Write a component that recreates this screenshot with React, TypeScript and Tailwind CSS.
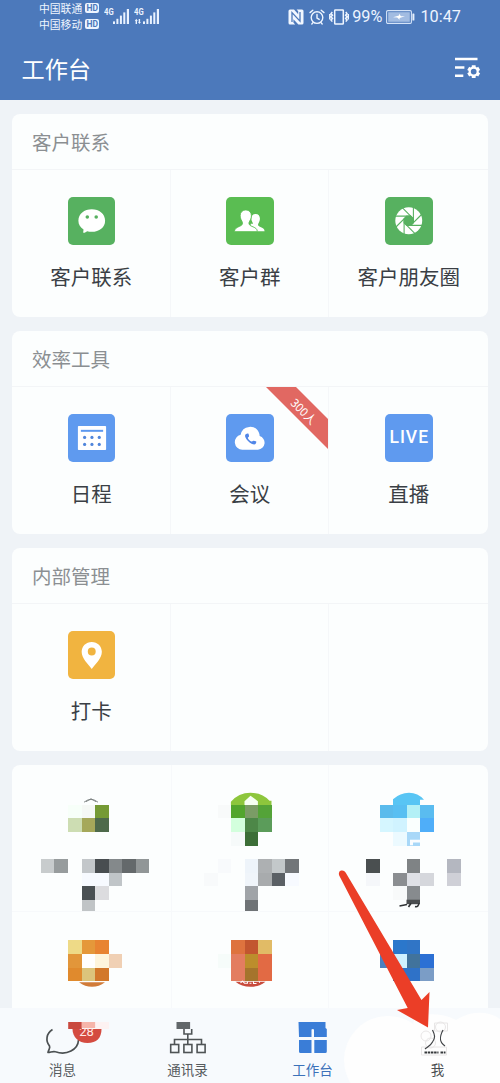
import type { ReactNode } from 'react';

const TILE = 13.55;
const ROW0 = 805.2;
const COL0 = 0.2;

type Tile = [col: number, row: number, color: string];

const NfcIcon = () => (
  <svg className="h-4 w-4 shrink-0" viewBox="0 0 16 16">
    <path fill="#f1f7ff" d="M2 0.5H6L10.2 5.3V2.2L8.6 0.5H14Q15.5 0.5 15.5 2V14Q15.5 15.5 14 15.5H10.4L5.4 10.2V13.6L7.2 15.5H2Q0.5 15.5 0.5 14V2Q0.5 0.5 2 0.5Z" />
    <path fill="none" stroke="#4c79bb" strokeWidth="1.3" d="M4 13V3.6L12 12.2V3" />
  </svg>
);

const AlarmIcon = () => (
  <svg className="h-4 w-4 shrink-0" viewBox="0 0 16 16" fill="none" stroke="#eef5ff" strokeWidth="1.4" strokeLinecap="round">
    <circle cx="8" cy="8.6" r="5.8" />
    <path d="M8 5.5V9L10.2 10.4M1 3.6L3.8 1.2M15 3.6L12.2 1.2M4 13.6L2.8 15M12 13.6L13.2 15" />
  </svg>
);

const VibrateIcon = () => (
  <svg className="h-4 w-5 shrink-0" viewBox="0 0 20 16" fill="none" stroke="#eef5ff" strokeWidth="1.5">
    <rect x="5.7" y="1" width="8.6" height="14" rx="0.6" />
    <path d="M3.3 3L2 4.6L3.5 6.2L2 7.8L3.5 9.4L2 11L3.3 12.6M0.8 5V10.5M16.8 3L18 4.6L16.6 6.2L18 7.8L16.6 9.4L18 11L16.8 12.6M19.3 5V10.5" />
  </svg>
);

const BatteryIcon = () => (
  <svg className="h-4 w-[29px] shrink-0" viewBox="0 0 29 16">
    <rect x="0.6" y="1.6" width="24.8" height="12.8" rx="1.2" fill="none" stroke="#d4e3f8" strokeWidth="1.1" />
    <rect x="2.2" y="3.2" width="21.6" height="9.6" fill="#a2bce2" />
    <path d="M7 8.2L13 6.5V4.8L15 7.3H19L13.6 8.9V10.8L11.2 8.6Z" fill="#fff" />
    <rect x="26.4" y="4.5" width="2" height="7" rx="0.6" fill="#e5effc" />
  </svg>
);

const Signal = ({ data }: { data?: boolean }) => (
  <div className="relative h-5 w-[26px]">
    <span className="absolute top-0 left-0 origin-left scale-x-[0.85] font-['Roboto',sans-serif] text-[9px] leading-[9px] font-bold text-[#edf4ff]">4G</span>
    <svg className="absolute inset-0 h-5 w-[26px]" viewBox="0 0 26 20" fill="#e9f2ff">
      <rect x="9" y="13.4" width="2" height="2.6" />
      <rect x="12.4" y="10.8" width="2" height="5.2" />
      <rect x="15.9" y="7.6" width="2" height="8.4" />
      <rect x="19.3" y="4.4" width="2" height="11.6" />
      <rect x="22.8" y="1" width="2.2" height="15" />
      {data && <path d="M0.8 12.9L2.3 10.8L3.8 12.9H3V16H1.6V12.9ZM4 13.9L5.4 16L6.9 13.9H6.1V11H4.7V13.9Z" />}
    </svg>
  </div>
);

const Carrier = ({ name }: { name: string }) => (
  <div className="flex h-4 items-center gap-[3px]">
    <span className="text-[10.8px] leading-4 text-[#f0f6ff]">{name}</span>
    <span className="flex h-[10px] w-[14px] items-center justify-center rounded-[2px] bg-[#edf4ff] font-['Roboto',sans-serif] text-[8.5px] leading-none font-bold text-[#4c79bb]">HD</span>
  </div>
);

const SettingsListIcon = () => (
  <svg className="h-6 w-[27px]" viewBox="0 0 27 24">
    <path d="M1 3H23.5M1 11.4H10.4M1 19.7H9.3" stroke="#fff" strokeWidth="2.5" />
    <path d="M19.7 9.2V22M14.2 12.4L25.2 18.8M25.2 12.4L14.2 18.8" stroke="#fff" strokeWidth="3.8" />
    <circle cx="19.7" cy="15.6" r="4" fill="#4c79bb" stroke="#fff" strokeWidth="2.2" />
  </svg>
);

const ChatIcon = () => (
  <svg className="h-full w-full" viewBox="0 0 48 48">
    <path fill="#fff" d="M24 12.5C31.6 12.5 37.5 17.3 37.5 24C37.5 30.8 31.6 35.2 24 35.2C22.4 35.2 20.8 35 19.4 34.6C18.2 35.3 17 36.4 15.6 36.2C15 36 15.6 34.5 15.7 32.8C12.5 30.8 10.5 27.8 10.5 24C10.5 17.3 16.4 12.5 24 12.5Z" />
    <circle cx="19.5" cy="20.3" r="1.8" fill="#57b160" />
    <circle cx="28.5" cy="20.3" r="1.8" fill="#57b160" />
  </svg>
);

const PeopleIcon = () => (
  <svg className="h-full w-full" viewBox="0 0 48 48" fill="#fff">
    <path d="M29.9 17.2C32.8 17.2 34.3 19.3 34.3 22C34.3 24.3 33 26 32.5 27.3C32.1 28.9 33 29.5 34.8 30.3C37.1 31.3 38.8 32 39 34.5H25V27L27.4 27C27 25.8 25.6 24 25.6 22C25.6 19.3 27 17.2 29.9 17.2Z" />
    <path stroke="#5abd52" strokeWidth="0.9" d="M20 13.1C23.6 13.1 25.7 15.6 25.7 19C25.7 22 24.1 23.8 23.3 25.7C22.8 27.8 24 28.7 26.3 29.7C29.5 31 31.6 32 31.7 35H8.5C8.5 32.3 10.4 31 13.5 29.7C15.9 28.7 17 27.8 16.6 25.7C15.9 23.8 14.3 22 14.3 19C14.3 15.6 16.4 13.1 20 13.1Z" />
  </svg>
);

const MomentsIcon = () => (
  <svg className="h-full w-full" viewBox="-24 -24 48 48">
    <circle r="13.6" fill="#fff" />
    <g fill="#57b160" stroke="#57b160" strokeWidth="1.1">
      <path d="M4.7 -2L2 -4.7H-2L-4.7 -2V2L-2 4.7H2L4.7 2Z" />
      {[0, 45, 90, 135, 180, 225, 270, 315].map((a) => (
        <path key={a} d="M4.7 2V-14" transform={`rotate(${a})`} />
      ))}
    </g>
  </svg>
);

const CalendarIcon = () => (
  <svg className="h-full w-full" viewBox="0 0 48 48">
    <rect x="10" y="12" width="28.5" height="24.5" rx="0.8" fill="#fff" />
    <rect x="13" y="16" width="22.5" height="2" fill="#5d98ef" />
    {[16.8, 24.2, 31.6].map((x) => (
      <g key={x} fill="#5186dc">
        <circle cx={x} cy="23.7" r="1.6" />
        <circle cx={x} cy="30.7" r="1.6" />
      </g>
    ))}
  </svg>
);

const CloudCallIcon = () => (
  <svg className="h-full w-full" viewBox="0 0 48 48">
    <path fill="#fff" d="M16.5 36A7.6 7.6 0 0 1 14.8 21A9.7 9.7 0 0 1 33.4 19.2C33.8 20.2 34 21.3 34 22.3A7 7 0 0 1 32.3 36Z" />
    <path fill="#5186e8" d="M20.2 20.2L22 19.6C22.5 19.4 23 20.5 23.3 22.3C23.4 23 22.2 23.5 22 24C22.4 25.6 24.2 27.4 25.8 27.9C26.4 28 27 26.9 27.7 27C29.4 27.3 30.7 27.7 30.7 28.2L30 30C29.6 31 27.8 31 26.3 30.3C23.4 29.1 20.6 26.3 19.6 23.6C19 22.2 19.2 20.7 20.2 20.2Z" />
  </svg>
);

const PinIcon = () => (
  <svg className="h-full w-full" viewBox="0 0 48 48">
    <path fill="#fff" fillRule="evenodd" d="M24 11C29.8 11 34.2 15.4 34.2 21C34.2 27.6 27.8 33.5 24 38.3C20.2 33.5 13.8 27.6 13.8 21C13.8 15.4 18.2 11 24 11ZM24 16.7A4 4 0 1 0 24 24.7A4 4 0 1 0 24 16.7Z" />
  </svg>
);

const AppEntry = ({ label, tone, children, ribbon }: { label: string; tone: string; children: ReactNode; ribbon?: boolean }) => (
  <div className="relative flex flex-col items-center overflow-hidden pt-[27px] pl-px">
    <div className={`h-[47.5px] w-[47.5px] rounded-[5px] ${tone}`}>{children}</div>
    <span className="mt-[16px] text-[20.5px] leading-[30px] text-[#3a3f45]">{label}</span>
    {ribbon && (
      <div className="absolute top-0 right-0 h-[62px] w-[62px] overflow-hidden">
        <svg className="absolute inset-0 h-full w-full" viewBox="0 0 62 62">
          <path d="M0 0H30L62 32V62Z" fill="#e16862" />
        </svg>
        <span className="absolute top-[16px] left-[18px] w-10 rotate-45 text-center text-[11.5px] leading-4 text-white">300人</span>
      </div>
    )}
  </div>
);

const Card = ({ title, children }: { title: string; children: ReactNode }) => (
  <section className="flex h-[202.5px] shrink-0 flex-col overflow-hidden rounded-lg bg-[#fcfefe]">
    <h2 className="h-14 shrink-0 border-b border-[#f3f5f7] pl-5 text-[19.5px] leading-[55px] font-normal text-[#8b8f92]">{title}</h2>
    <div className="grid flex-1 grid-cols-3 divide-x divide-[#f5f7f9]">{children}</div>
  </section>
);

const Mosaic = ({ tiles, box, under, over }: { tiles: Tile[]; box: string; under?: ReactNode; over?: ReactNode }) => (
  <svg className="block h-full w-full" viewBox={box} preserveAspectRatio="xMinYMin slice">
    {under}
    <g shapeRendering="crispEdges">
      {tiles.map(([c, r, color]) => (
        <rect key={`${c}-${r}`} x={COL0 + c * TILE} y={ROW0 + r * TILE} width={TILE} height={TILE} fill={color} />
      ))}
    </g>
    {over}
  </svg>
);

const leafTiles: Tile[] = [
  [5, 0, '#f7fff9'], [6, 0, '#f5f8f5'], [7, 0, '#759a35'], [5, 1, '#cdddb3'], [6, 1, '#a5a85a'], [7, 1, '#4e6a4b'],
  [3, 4, '#c8cccd'], [4, 4, '#979c9d'], [6, 4, '#c3c7ca'], [7, 4, '#484d50'], [8, 4, '#84898b'], [9, 4, '#64696b'], [10, 4, '#919697'],
  [6, 5, '#f7faff'], [7, 5, '#f7faff'], [8, 5, '#c0c5c8'], [6, 6, '#4a5053'], [7, 6, '#dcdcdf'], [6, 7, '#c0c4c6'],
];
const greenTiles: Tile[] = [
  [16, 0, '#f8fafa'], [17, 0, '#52a52d'], [18, 0, '#7b9c66'], [19, 0, '#54a338'], [17, 1, '#d3ffdd'], [18, 1, '#4d8748'], [19, 1, '#5b9c5a'],
  [17, 2, '#f6fafa'], [18, 2, '#3c6e37'], [16, 4, '#f8fafc'], [18, 4, '#eef4fa'], [19, 4, '#adb0b2'], [20, 4, '#c3c8ca'], [21, 4, '#727679'],
  [15, 5, '#f8fafb'], [18, 5, '#f0f5fa'], [19, 5, '#a8abad'], [20, 5, '#5b6065'], [21, 5, '#f7faff'], [18, 6, '#a0a4a8'], [18, 7, '#6f7376'],
];
const skyTiles: Tile[] = [
  [28, 0, '#5abbec'], [29, 0, '#58bff2'], [30, 0, '#b3f0f6'], [31, 0, '#5abcf0'], [28, 1, '#d5f6ff'], [29, 1, '#d0f3ff'], [30, 1, '#fafffe'], [31, 1, '#4faef9'],
  [29, 2, '#ecfaff'], [30, 2, '#a8d8f8'], [27, 4, '#4a4f50'], [30, 4, '#7f8385'], [33, 4, '#b4b7c0'],
  [27, 5, '#f5f7fa'], [29, 5, '#8b8e91'], [30, 5, '#dfe1e6'], [31, 5, '#d5d7dc'], [33, 5, '#cfd0d7'], [29, 6, '#f8fafa'], [30, 6, '#878b8e'],
];
const orangeTiles: Tile[] = [
  [5, 10, '#eeda87'], [6, 10, '#e5983a'], [7, 10, '#e88432'], [5, 11, '#e2963a'], [6, 11, '#ffffff'], [7, 11, '#fef5dc'], [8, 11, '#f0d0b4'],
  [5, 12, '#e08a2d'], [6, 12, '#dcc47b'], [7, 12, '#d2782b'],
];
const redTiles: Tile[] = [
  [17, 10, '#de733e'], [18, 10, '#c2562f'], [19, 10, '#e1bb66'], [16, 11, '#f6fcfa'], [17, 11, '#e37d60'], [18, 11, '#bc8d2c'], [19, 11, '#e26a44'],
  [17, 12, '#e37d60'], [18, 12, '#a5742c'], [19, 12, '#e26a44'],
];
const blueTiles: Tile[] = [
  [29, 10, '#2b77cb'], [30, 10, '#3075c6'], [28, 11, '#4b80bf'], [29, 11, '#d0f1ff'], [30, 11, '#41739c'], [31, 11, '#2c70d4'],
  [29, 12, '#2f72c8'], [30, 12, '#2f72c8'], [31, 12, '#7b9dc6'],
];

const MessageTabIcon = () => (
  <div className="relative h-9 w-20">
    <svg className="absolute inset-0 h-full w-full" viewBox="22.5 1020 80 36">
      <path d="M52 1029.5C45.5 1033.5 45 1041 49 1046C50 1048 48 1050 47.5 1052.5C50 1052.5 52.5 1050.8 55 1051.8C66 1055.5 77.5 1050 78 1040" fill="none" stroke="#4b5052" strokeWidth="1.7" strokeLinejoin="round" />
      <path d="M72 1029H101C101 1038 96 1043 87 1043C78 1043 72 1037 72 1029Z" fill="#d44b40" />
    </svg>
    <span className="absolute top-[4px] left-[49.5px] w-[29px] text-center font-['Roboto',sans-serif] text-[13px] leading-4 text-[#ffe8e5]">28</span>
    <svg className="absolute inset-0 h-full w-full overflow-visible" viewBox="22.5 1020 80 36">
      <rect x="67.7" y="1022" width="13.6" height="7" fill="#c9493f" />
      <rect x="81.3" y="1022" width="13.6" height="6" fill="#f6b5aa" />
      <rect x="94.9" y="1022" width="13.6" height="7" fill="#fdf2f2" />
    </svg>
  </div>
);

const ContactsTabIcon = () => (
  <svg className="h-9 w-20" viewBox="147.5 1020 80 36" fill="none" stroke="#4f5456" strokeWidth="1.6">
    <rect x="176" y="1022" width="13.6" height="7" fill="#62676a" stroke="none" />
    <path d="M183.5 1029V1034H191.2V1029M187.3 1034V1039.3M174 1044V1039.5H201V1044M187.3 1039V1044" />
    <rect x="170.2" y="1044.5" width="8" height="8" />
    <rect x="183.4" y="1044.5" width="8" height="8" />
    <rect x="196.6" y="1044.5" width="8" height="8" />
  </svg>
);

const WorkTabIcon = () => (
  <svg className="h-9 w-20" viewBox="272.5 1020 80 36" fill="#3a7dd7">
    <path d="M298 1022H325V1028L326.3 1029V1037H313.5V1029.5Q312.2 1028.5 311 1029.5V1037H298.5Z" />
    <path d="M298.5 1040H311V1053H300Q298.5 1053 298.5 1051.5ZM313.8 1040H326.3V1051.5Q326.3 1053 324.8 1053H313.8Z" />
  </svg>
);

const MeTabIcon = () => (
  <svg className="h-9 w-20" viewBox="397.5 1020 80 36" fill="none">
    <g stroke="#e5e3e3" strokeWidth="0.9">
      <circle cx="425.5" cy="1036" r="5" />
      <circle cx="440" cy="1027" r="5" />
      <circle cx="430" cy="1043" r="5" />
      <path d="M434 1023H447V1031H434ZM421 1047H446V1055H421Z" />
    </g>
    <path d="M432 1030C434.5 1035 435 1038 432 1042C430 1046 427 1047 424.5 1049M442.5 1030C438.8 1037 438.5 1042 444.5 1046" stroke="#404346" strokeWidth="1.2" />
    <path d="M424 1052.5H438M440 1052.5H445" stroke="#35383a" strokeWidth="1.8" strokeDasharray="2.5 0.7" />
  </svg>
);

const Tab = ({ label, tone, children }: { label: string; tone: string; children: ReactNode }) => (
  <div className="relative flex w-[125px] flex-col items-center pt-3">
    {children}
    <span className={`mt-[2px] text-[13.5px] leading-[22px] ${tone}`}>{label}</span>
  </div>
);

export default function App() {
  return (
    <div className="relative flex h-[1083px] w-[500px] flex-col overflow-hidden bg-[#eff3f7] font-['Noto_Sans_CJK_SC',sans-serif]">
      <header className="flex h-[100px] shrink-0 flex-col bg-[#4c79bb]">
        <div className="flex h-[35px] items-start justify-between pr-[39px] pl-[39px]">
          <div className="flex items-start">
            <div className="flex flex-col">
              <Carrier name="中国联通" />
              <Carrier name="中国移动" />
            </div>
            <div className="flex gap-1 pt-2 pl-[5px]">
              <Signal />
              <Signal data />
            </div>
          </div>
          <div className="flex items-center pt-[9px] font-['Roboto',sans-serif] text-[16.3px] leading-4 text-[#edf4ff]">
            <NfcIcon />
            <span className="w-[5px]" />
            <AlarmIcon />
            <span className="w-[4px]" />
            <VibrateIcon />
            <span className="ml-[3px]">99%</span>
            <span className="w-[4px]" />
            <BatteryIcon />
            <span className="ml-[5px]">10:47</span>
          </div>
        </div>
        <div className="flex h-[65px] items-center justify-between pr-[19px] pl-[21.5px]">
          <h1 className="text-[23.2px] leading-[64px] font-normal text-white">工作台</h1>
          <SettingsListIcon />
        </div>
      </header>

      <main className="flex h-[908px] shrink-0 flex-col gap-[14.6px] overflow-hidden pt-[14px] pr-[12.5px] pl-3">
        <Card title="客户联系">
          <AppEntry label="客户联系" tone="bg-[#57b160]"><ChatIcon /></AppEntry>
          <AppEntry label="客户群" tone="bg-[#5abd52]"><PeopleIcon /></AppEntry>
          <AppEntry label="客户朋友圈" tone="bg-[#57b160]"><MomentsIcon /></AppEntry>
        </Card>
        <Card title="效率工具">
          <AppEntry label="日程" tone="bg-[#5f9aef]"><CalendarIcon /></AppEntry>
          <AppEntry label="会议" tone="bg-[#5f9aef]" ribbon><CloudCallIcon /></AppEntry>
          <AppEntry label="直播" tone="bg-[#5f9aef]">
            <span className="flex h-full items-center justify-center pl-px font-['Roboto',sans-serif] text-[17.5px] leading-none font-medium tracking-[1px] text-white">LIVE</span>
          </AppEntry>
        </Card>
        <Card title="内部管理">
          <AppEntry label="打卡" tone="bg-[#f1b440]"><PinIcon /></AppEntry>
          <div />
          <div />
        </Card>
        <section className="grid h-[260px] shrink-0 grid-cols-3 grid-rows-[147px_113px] rounded-t-lg bg-[#fcfefe]">
          <div className="border-b border-[#f7f9fb]">
            <Mosaic
              box="12 765.3 158.5 146"
              tiles={leafTiles}
              over={<path d="M84 802.5Q91 797 98 802.5M86 802L91 799L96 802" fill="none" stroke="#777d7d" strokeWidth="0.9" />}
            />
          </div>
          <div className="border-x border-b border-[#f7f9fb]">
            <Mosaic
              box="171.5 765.3 156.5 146"
              tiles={greenTiles}
              under={
                <>
                  <path d="M230.4 806V802Q238 793 250 793Q262 793 269 801H271V806Z" fill="#8dc63c" />
                  <path d="M244 806V801.5L250 796L257.4 801.5V806Z" fill="#f6fff2" />
                </>
              }
            />
          </div>
          <div className="border-b border-[#f7f9fb]">
            <Mosaic
              box="329 765.3 158.5 146"
              tiles={skyTiles}
              under={<path d="M393 806V799.5Q400 793 409 793Q418 793 424 800H420V806Z" fill="#58c5f4" />}
              over={
                <>
                  <path d="M410 840H420.2V842.8H413V845.6H410Z" fill="#fafdff" />
                  <path d="M406.5 900H420V904.5H406.5Z" fill="#4a4d4f" />
                  <path d="M399.5 906.3L407 904.8M411 903.5L408.5 907.3M418.8 903.5Q418.5 907.8 415 906.8" fill="none" stroke="#303335" strokeWidth="1.6" />
                </>
              }
            />
          </div>
          <Mosaic
            box="12 912.3 158.5 113"
            tiles={orangeTiles}
            under={<path d="M79 982.5H105Q99 987 92 987Q85 987 79 982.5Z" fill="#d17b38" />}
          />
          <div className="border-x border-[#f7f9fb]">
            <Mosaic
              box="171.5 912.3 156.5 113"
              tiles={redTiles}
              under={<path d="M235 982H265Q259 987 250 987Q241 987 235 982Z" fill="#c84b3d" />}
              over={<path d="M240 983L242 981.5L244 983.5H247V981.8M249 983.5H251M253 981.5V983.8H256M259 981.5V983" fill="none" stroke="#fff" strokeWidth="1.1" />}
            />
          </div>
          <Mosaic box="329 912.3 158.5 113" tiles={blueTiles} />
        </section>
      </main>

      <nav className="relative flex h-[75px] shrink-0 bg-[#f7fafd]">
        <svg className="absolute inset-0 h-full w-full overflow-visible" viewBox="0 0 500 75" fill="#fefefe">
          <circle cx="388" cy="52" r="44" />
          <path d="M415 8Q440 3 456 12Q470 3 485 5Q495 7 500 11V75H400Z" />
        </svg>
        <Tab label="消息" tone="text-[#565b5e]"><MessageTabIcon /></Tab>
        <Tab label="通讯录" tone="text-[#565b5e]"><ContactsTabIcon /></Tab>
        <Tab label="工作台" tone="text-[#3b71b9]"><WorkTabIcon /></Tab>
        <Tab label="我" tone="text-[#4c5052]"><MeTabIcon /></Tab>
      </nav>

      <svg className="pointer-events-none absolute top-[868px] left-[335px] h-[162px] w-[100px]" viewBox="335 868 100 162">
        <path d="M339.2 875.5Q338 871.5 341 870.6Q344 869.8 345.6 872.5L421.5 1000L429.5 992L428 1027.5L397 1010L407.7 1008Z" fill="#eb3e27" />
      </svg>
    </div>
  );
}
